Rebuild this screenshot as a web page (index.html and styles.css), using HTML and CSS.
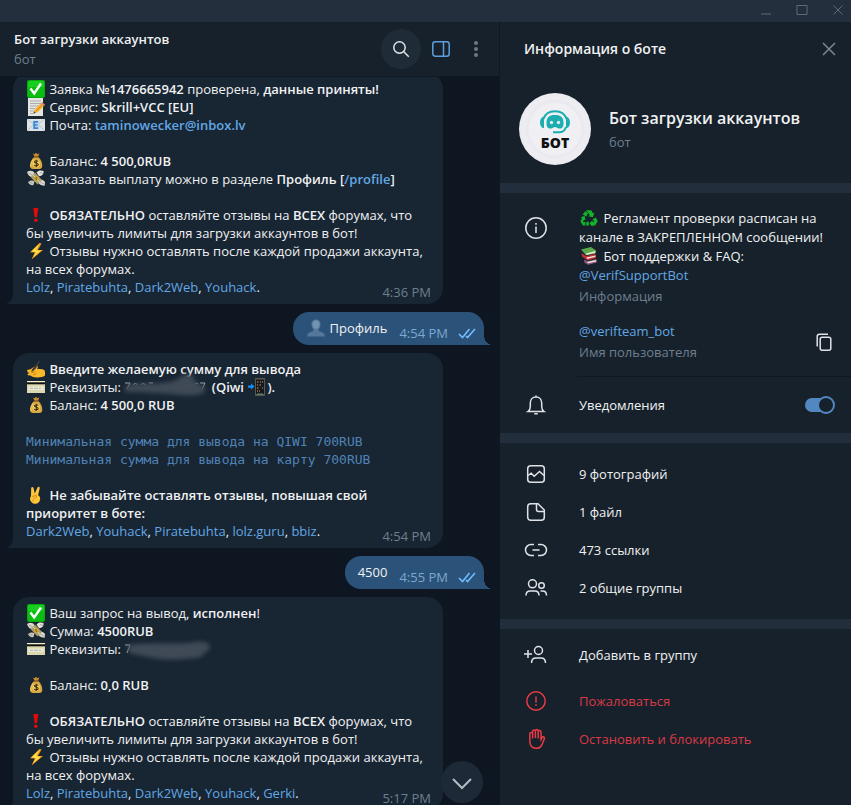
FILE: index.html
```
<!DOCTYPE html>
<html lang="ru">
<head>
    <meta charset="UTF-8">
    <meta name="viewport" content="width=device-width, initial-scale=1.0">
    <title>Бот загрузки аккаунтов</title>
    <link rel="stylesheet" href="styles.css">
</head>
<body>
    <!-- emoji sprite -->
    <svg class="sprite" aria-hidden="true">
        <symbol id="e-check" viewBox="0 0 18 18">
            <rect width="18" height="18" rx="2" fill="#06a80b"/>
            <rect x="1" y="1" width="16" height="8" rx="1.500" fill="#17cf1e"/>
            <rect x="1" y="7" width="16" height="10" rx="1.500" fill="#0bbd10"/>
            <path d="M3.500 8.500 L7.200 13.500 L14 3.500" fill="none" stroke="#fff" stroke-width="2.400"/>
        </symbol>
        <symbol id="e-memo" viewBox="0 0 18 18">
            <path d="M1 0h15v18H1z" fill="#e4e4e2"/>
            <path d="M3 3h11M3 5.500h11M3 8h9M3 10.500h5M3 13h4M3 15.500h4" stroke="#a9adb0" stroke-width="1"/>
            <path d="M6.500 15.500l1.200-4L14 5.200l3 2.800-6.500 6.300z" fill="#f5b22d"/>
            <path d="M9 13l6.500-6.300" stroke="#d9871b" stroke-width="1"/>
            <path d="M14 5.200l1.200-1.100 2.800 2.700L17 8z" fill="#e8787c"/>
            <path d="M6.500 15.500l.7-2.200 1.500 1.400z" fill="#333"/>
        </symbol>
        <symbol id="e-mail" viewBox="0 0 18 18">
            <rect y="3" width="18" height="12" fill="#dfe3e6"/>
            <path d="M0 3l9 7 9-7M0 15l6-6M18 15l-6-6" fill="none" stroke="#b4bcc2" stroke-width=".8"/>
            <rect x="5.500" y="4.500" width="7" height="9" fill="#b9d5ef"/>
            <path d="M11 5.800H7.200v6.400H11M7.200 9h3.400" fill="none" stroke="#3f83c8" stroke-width="1.700"/>
        </symbol>
        <symbol id="e-bag" viewBox="0 0 18 18">
            <path d="M6 1.500l1.500.8L9 .8l1.500 1.500 2-1-1.500 3.700H7.500z" fill="#c58b2c"/>
            <path d="M7.200 5h4c3 2.500 4.300 6 4 9.500-.2 1.700-1.500 2.500-3 2.500H6c-1.700 0-2.800-.9-3-2.500C2.700 11 4.300 7.500 7.200 5z" fill="#d9a941"/>
            <path d="M6 7.500c-1.500 2-2.300 4.500-2 7" stroke="#f3cf73" fill="none"/>
            <path d="M6.800 5h4.800" stroke="#7d4d16" stroke-width="1.300"/>
            <circle cx="9.200" cy="11.300" r="3.900" fill="#f0c95b"/>
            <path d="M11.200 9.500c-.8-1.200-3.800-1-3.700.5.1 1.500 3.800.9 3.800 2.600 0 1.600-3.200 1.700-4 .3M9.300 7.700v7.200" fill="none" stroke="#453010" stroke-width="1.100"/>
        </symbol>
        <symbol id="e-wings" viewBox="0 0 18 18">
            <path d="M0 2c3-2 6-1.500 7.500 1.200L6.500 7C3 7.500 1 5.500 0 2z" fill="#d9d7cc"/>
            <path d="M9.500 2.500C11 .3 14 0 16.500 1 17 4 15 6 12 6.300z" fill="#e6e4da"/>
            <path d="M1 12c2-2 5-2 6.500-.7l-1 3.700c-2.500.7-4.500-.5-5.500-3z" fill="#c8c6bb"/>
            <path d="M11.500 10c2.500-1 5 0 6.500 2l-.3 3.700c-2.700 0-5-.7-6.200-2.700z" fill="#dedcd2"/>
            <path d="M2 3l4 2.500M13 2.500l3 1M13 12l4 2M2.500 12.500l3 .5" stroke="#8f8f85" stroke-width=".7"/>
            <path d="M3.500 7l4.500-4.500 7 7.500-4.500 4.500z" fill="#a8a06f"/>
            <path d="M5.800 4.700l7 7.500" stroke="#e7e0a8" stroke-width="1"/>
            <circle cx="9.300" cy="8.500" r="2.300" fill="#d3a62f"/>
            <path d="M9.500 7.200l-1 1 1.300 1-.8.8" fill="none" stroke="#5f4a12" stroke-width=".8"/>
        </symbol>
        <symbol id="e-excl" viewBox="0 0 18 18">
            <path d="M6.300 2h5L10 11.300H7.600z" fill="#e00b0b"/>
            <circle cx="8.800" cy="14.300" r="1.800" fill="#e00b0b"/>
        </symbol>
        <symbol id="e-bolt" viewBox="0 0 18 18">
            <path d="M12.500 1L3 10.200l4.800.3L4.500 17.500l11.500-9.400-5.200-.2L14.500 1.500z" fill="#f9a01b"/>
            <path d="M12.300 2L4.500 9.600l4.700.3-3 5.400 7.500-6.600-4.700-.4z" fill="#ffe14a"/>
        </symbol>
        <symbol id="e-user" viewBox="0 0 18 18">
            <path d="M9 .5c3.200 0 4.600 2.200 4.600 5 0 2-1 3.800-2.100 5 .1 1.500.8 2 2.500 2.500 2.200.6 3.500 1.500 4 4.500H0c.5-3 1.800-3.900 4-4.500 1.700-.5 2.400-1 2.500-2.500-1.100-1.200-2.100-3-2.100-5 0-2.800 1.400-5 4.600-5z" fill="#54789a"/>
            <path d="M9 1.500c2.400 0 3.500 1.700 3.500 4S10.800 10 9 10 5.500 7.800 5.500 5.500s1.100-4 3.500-4z" fill="#7293b1"/>
        </symbol>
        <symbol id="e-write" viewBox="0 0 18 18">
            <path d="M0 10l3.500-.8L6 7.500 9 5.800c1.200-.5 2.200.3 1.700 1.500L10 8.700l5.500.6c1.800.3 2.500 1.500 2.500 3.200v3c-2 1.500-5 2-8 1.900-3 0-5.200-.6-6.500-1.900L1 15.300l-.6-1.300 2.200-1-1.800-.4z" fill="#fbb92a"/>
            <path d="M5 9.500L12 .5l1 .7L8.500 9l-4.300 3.500z" fill="#3f3a35"/>
            <path d="M4.500 13l4-1.500M6 15l3.500-1.500" stroke="#c87d13" stroke-width=".9"/>
        </symbol>
        <symbol id="e-card" viewBox="0 0 18 18">
            <rect y="3" width="18" height="12" fill="#dcd8ae"/>
            <rect y="3" width="18" height="1.300" fill="#f4f1d0"/>
            <rect y="4.300" width="18" height="2" fill="#111"/>
            <rect x="1.500" y="8.500" width="15" height="3.500" fill="#ebe8cf"/>
            <path d="M3 10.300h3M7 10.300h4M12 10.300h2" stroke="#a9b4c4" stroke-width="1"/>
        </symbol>
        <symbol id="e-phone" viewBox="0 0 18 18">
            <rect x="7" width="10" height="18" rx="1" fill="#58584f"/>
            <rect x="8" y="1.500" width="8" height="14.500" fill="#15191b"/>
            <path d="M9 4h1.500M12 4h1M14 4h1M9 7h1M11.500 7H13M9 10h1.500M14 10h1M9 13h1M11 13h1" stroke="#a8694f" stroke-width="1.300"/>
            <path d="M9 16h6" stroke="#5f9a77"/>
            <path d="M0 7.500h3V5.500l3.500 3-3.500 3V9.700H0z" fill="#1490f3"/>
        </symbol>
        <symbol id="e-victory" viewBox="0 0 18 18">
            <path d="M4 10L4.200 2c.2-1.500 2-1.500 2.300 0l1.300 5.500L10.500 1.400c.7-1.200 2.500-.6 2.200.8l-1.600 7c1.700.8 2.300 2.500 2 4.300C12.700 16 11 17.800 8.500 17.800 5.500 17.800 3 15.500 3 12.500z" fill="#fdc53a"/>
            <path d="M5 10.500l3.500-1c1.300.2 1.300 1.800 0 2.200l-2 .6M9.500 9.500v1.800M7 13c-1 .8-1.300 1.500-1 2.500" fill="none" stroke="#cf8517" stroke-width=".9"/>
        </symbol>
        <symbol id="e-recycle" viewBox="0 0 18 18">
            <g fill="#12b32b">
                <path d="M5.800 1.300h5.400l1.700 3 1.500-.6-1.500 4.500-4.600-1 1.500-.9-1.600-2.500z"/>
                <path d="M5.200 2.200l3 1.800-2 3.400-3.500-2z"/>
                <path d="M4.500 6.800l1.200 4.600-1.500-.8-1.300 2.300 2.500.1v3.600H3L.4 12.200 2 9.300.7 8.500z"/>
                <path d="M6.300 12.800h2.500v3.800H6.300z"/>
                <path d="M15.800 8.500l1.900 3.500-2.600 4.400h-2.600v1.400L9.400 14.600l3.100-3.300V13h1.800l-1.700-2.800z"/>
            </g>
        </symbol>
        <symbol id="e-books" viewBox="0 0 18 18">
            <path d="M1 2.500L11 0l5 3.500-1 3.200-9 1.500z" fill="#59a84a"/>
            <path d="M6 6.500L15.500 4v1.700L6 8z" fill="#e9e6da"/>
            <path d="M1.500 6l4.500 3 9.500-2 .5 4-8 2.500L2 9.500z" fill="#c62f35"/>
            <path d="M6.500 10.500l9-2v1.300l-8.500 2.200z" fill="#f0ece2"/>
            <path d="M4 12.500l4 1.700 8.500-2.200.5 3.500L8 17.800l-3.500-2z" fill="#8b5878"/>
            <path d="M7 15l9-2v1.500L8 16.300z" fill="#ece8e6"/>
        </symbol>
        <symbol id="i-checks" viewBox="0 0 18 12">
            <path d="M1 7l3.500 3.500L11.500 2M8 9l1.500 1.500L17 2" fill="none" stroke="#72bcfd" stroke-width="1.600"/>
        </symbol>
    </svg>

    <div class="titlebar">
        <button type="button" class="win-btn" aria-label="Свернуть">
            <svg width="12" height="12" viewBox="0 0 12 12"><path d="M1 10h10"/></svg>
        </button>
        <button type="button" class="win-btn" aria-label="Развернуть">
            <svg width="12" height="12" viewBox="0 0 12 12"><path d="M1 1.500h10v9H1z"/></svg>
        </button>
        <button type="button" class="win-btn" aria-label="Закрыть">
            <svg width="12" height="12" viewBox="0 0 12 12"><path d="M1.500 1.500l9 9M10.500 1.500l-9 9"/></svg>
        </button>
    </div>

    <div class="window">
        <main class="chat">
            <header class="chat-header">
                <div class="chat-title">
                    <h1>Бот загрузки аккаунтов</h1>
                    <p>бот</p>
                </div>
                <button type="button" class="icon-btn search" aria-label="Поиск">
                    <svg width="20" height="20" viewBox="0 0 20 20"><circle cx="8.500" cy="8.500" r="5.700"/><path d="M12.800 12.800l5 5"/></svg>
                </button>
                <button type="button" class="icon-btn panel-toggle" aria-label="Информация">
                    <svg width="20" height="20" viewBox="0 0 20 20"><rect x="1.800" y="2.800" width="16.400" height="14.400" rx="2.500"/><path d="M12.500 3v14"/></svg>
                </button>
                <button type="button" class="icon-btn more" aria-label="Меню">
                    <svg width="20" height="20" viewBox="0 0 20 20"><circle cx="10" cy="4" r="2"/><circle cx="10" cy="10" r="2"/><circle cx="10" cy="16" r="2"/></svg>
                </button>
            </header>

            <div class="messages">
                <div class="bubble in">
                    <svg class="emoji"><use href="#e-check"/></svg> Заявка <b>№1476665942</b> проверена, <b>данные приняты!</b><br>
                    <svg class="emoji"><use href="#e-memo"/></svg> Сервис: <b>Skrill+VCC [EU]</b><br>
                    <svg class="emoji"><use href="#e-mail"/></svg> Почта: <b><a href="#">taminowecker@inbox.lv</a></b><br>
                    <br>
                    <svg class="emoji"><use href="#e-bag"/></svg> Баланс: <b>4 500,0RUB</b><br>
                    <svg class="emoji"><use href="#e-wings"/></svg> Заказать выплату можно в разделе <b>Профиль [<a href="#">/profile</a>]</b><br>
                    <br>
                    <svg class="emoji"><use href="#e-excl"/></svg> <b>ОБЯЗАТЕЛЬНО</b> оставляйте отзывы на <b>ВСЕХ</b> форумах, что<br>
                    бы увеличить лимиты для загрузки аккаунтов в бот!<br>
                    <svg class="emoji"><use href="#e-bolt"/></svg> Отзывы нужно оставлять после каждой продажи аккаунта,<br>
                    на всех форумах.
                    <div class="last-line">
                        <span><a href="#">Lolz</a>, <a href="#">Piratebuhta</a>, <a href="#">Dark2Web</a>, <a href="#">Youhack</a>.</span>
                        <time>4:36 PM</time>
                    </div>
                </div>

                <div class="bubble out">
                    <div class="last-line">
                        <span><svg class="emoji"><use href="#e-user"/></svg> Профиль</span>
                        <time>4:54 PM <svg class="checks"><use href="#i-checks"/></svg></time>
                    </div>
                </div>

                <div class="bubble in">
                    <svg class="emoji"><use href="#e-write"/></svg> <b>Введите желаемую сумму для вывода</b><br>
                    <svg class="emoji"><use href="#e-card"/></svg> Реквизиты: <svg class="smudge" viewBox="0 0 84 18">
                        <path class="digits" d="M1 5h5l-3 6M9 7c1-2 4-2 4 0M17 7c1-2 4-2 4 0M25 5h4M70 7c1-2 3-2 4-1M76 5h5l-3 6"/>
                        <path class="ink" d="M1 8C18 3 42 8 54 1C60-6 72-5 70 3L81 9C83 17 72 18 58 17C42 16 30 14 1 14z"/>
                    </svg> <b>(Qiwi <svg class="emoji"><use href="#e-phone"/></svg>).</b><br>
                    <svg class="emoji"><use href="#e-bag"/></svg> Баланс: <b>4 500,0 RUB</b><br>
                    <br>
                    <code>Минимальная сумма для вывода на QIWI 700RUB</code><br>
                    <code>Минимальная сумма для вывода на карту 700RUB</code><br>
                    <br>
                    <svg class="emoji"><use href="#e-victory"/></svg> <b>Не забывайте оставлять отзывы, повышая свой<br>
                    приоритет в боте:</b>
                    <div class="last-line">
                        <span><a href="#">Dark2Web</a>, <a href="#">Youhack</a>, <a href="#">Piratebuhta</a>, <a href="#">lolz.guru</a>, <a href="#">bbiz</a>.</span>
                        <time>4:54 PM</time>
                    </div>
                </div>

                <div class="bubble out">
                    <div class="last-line">
                        <span>4500</span>
                        <time>4:55 PM <svg class="checks"><use href="#i-checks"/></svg></time>
                    </div>
                </div>

                <div class="bubble in">
                    <svg class="emoji"><use href="#e-check"/></svg> Ваш запрос на вывод, <b>исполнен</b>!<br>
                    <svg class="emoji"><use href="#e-wings"/></svg> Сумма: <b>4500RUB</b><br>
                    <svg class="emoji"><use href="#e-card"/></svg> Реквизиты: <svg class="smudge" viewBox="0 0 84 18">
                        <path class="digits" d="M1 5h5l-3 8"/>
                        <path class="ink" d="M4 5C28 2 50 4 66 3C80-1 89 4 85 10C79 13 80 18 70 18C54 20 40 20 30 18C18 16 8 14 4 12z"/>
                    </svg><br>
                    <br>
                    <svg class="emoji"><use href="#e-bag"/></svg> Баланс: <b>0,0 RUB</b><br>
                    <br>
                    <svg class="emoji"><use href="#e-excl"/></svg> <b>ОБЯЗАТЕЛЬНО</b> оставляйте отзывы на <b>ВСЕХ</b> форумах, что<br>
                    бы увеличить лимиты для загрузки аккаунтов в бот!<br>
                    <svg class="emoji"><use href="#e-bolt"/></svg> Отзывы нужно оставлять после каждой продажи аккаунта,<br>
                    на всех форумах.
                    <div class="last-line">
                        <span><a href="#">Lolz</a>, <a href="#">Piratebuhta</a>, <a href="#">Dark2Web</a>, <a href="#">Youhack</a>, <a href="#">Gerki</a>.</span>
                        <time>5:17 PM</time>
                    </div>
                </div>
            </div>

            <button type="button" class="scroll-down" aria-label="Вниз">
                <svg width="20" height="20" viewBox="0 0 20 20"><path d="M1 7l9 9 9-9"/></svg>
            </button>
        </main>

        <aside class="info">
            <header class="info-header">
                <h2>Информация о боте</h2>
                <button type="button" class="icon-btn close" aria-label="Закрыть">
                    <svg width="14" height="14" viewBox="0 0 14 14"><path d="M1 1l12 12M13 1L1 13"/></svg>
                </button>
            </header>

            <div class="profile">
                <div class="avatar">
                    <svg width="32" height="24" viewBox="0 0 32 24">
                        <path d="M4.500 9C6 3.500 10.500 1.200 16 1.200S26 3.500 27.500 9" fill="none" stroke="#1aaeb0" stroke-width="2"/>
                        <path d="M5 6.500v11.700C2.500 18 1 16 1 12.500S2.500 7.500 5 6.500zM27 6.500v11.700c2.500-.2 4-2.200 4-5.700s-1.500-5-4-6z" fill="#1aaeb0"/>
                        <path d="M7.500 13C7.500 7.500 10 5 16 5s8.500 2.500 8.500 8-2.500 5.500-4.500 5.500-2-1.500-4-1.500-2 1.500-4 1.500-4.500 0-4.500-5.500z" fill="#1aaeb0"/>
                        <circle cx="12.500" cy="12.500" r="1.700" fill="#e9e9f0"/>
                        <circle cx="19.500" cy="12.500" r="1.700" fill="#e9e9f0"/>
                        <path d="M27 17c-1 3.500-3.500 5.300-7 5.300h-6" fill="none" stroke="#1aaeb0" stroke-width="2"/>
                    </svg>
                    <span>БОТ</span>
                </div>
                <div class="profile-name">
                    <h3>Бот загрузки аккаунтов</h3>
                    <p>бот</p>
                </div>
            </div>

            <section class="block about">
                <svg class="icon" viewBox="0 0 24 24"><circle cx="12" cy="12" r="10.200"/><path d="M12 10.500v6.500M12 7v1.800"/></svg>
                <div class="about-text">
                    <p><svg class="emoji"><use href="#e-recycle"/></svg> Регламент проверки расписан на<br>
                    канале в ЗАКРЕПЛЕННОМ сообщении!<br>
                    <svg class="emoji"><use href="#e-books"/></svg> Бот поддержки &amp; FAQ:<br>
                    <a href="#">@VerifSupportBot</a></p>
                    <p class="label">Информация</p>
                </div>
                <div class="username">
                    <div>
                        <p><a href="#">@verifteam_bot</a></p>
                        <p class="label">Имя пользователя</p>
                    </div>
                    <button type="button" class="icon-btn copy" aria-label="Копировать">
                        <svg width="20" height="20" viewBox="0 0 20 20"><rect x="6.200" y="5.200" width="10.600" height="13" rx="2"/><path d="M3.200 14.500V4.500a2.300 2.300 0 0 1 2.300-2.300H14"/></svg>
                    </button>
                </div>
            </section>

            <div class="notify">
                <svg class="icon" viewBox="0 0 24 24"><path d="M4 18.500c1.800-1.300 2.300-2.500 2.300-5V10c0-3.500 2.200-6 5.700-6s5.700 2.500 5.700 6v3.500c0 2.500.5 3.700 2.300 5zM12 4V2.500M10.300 20.800h3.400"/></svg>
                <label for="notifications">Уведомления</label>
                <input type="checkbox" class="toggle" id="notifications" checked>
            </div>

            <section class="block list">
                <button type="button" class="row">
                    <svg class="icon" viewBox="0 0 24 24"><rect x="3.700" y="3.700" width="16.600" height="16.600" rx="3"/><path d="M4 13.500l3.200-2.300 3 3 5.300-4.700 4.500 4"/></svg>
                    9 фотографий
                </button>
                <button type="button" class="row">
                    <svg class="icon" viewBox="0 0 24 24"><path d="M6.700 3.700H14l6.300 6.300v7.300a3 3 0 0 1-3 3H6.700a3 3 0 0 1-3-3V6.700a3 3 0 0 1 3-3z"/><path d="M12.500 4v5.500a2 2 0 0 0 2 2H20"/></svg>
                    1 файл
                </button>
                <button type="button" class="row">
                    <svg class="icon" viewBox="0 0 24 24"><path d="M10 6.500H7a5.500 5.500 0 0 0 0 11h3M14 6.500h3a5.500 5.500 0 0 1 0 11h-3M8.500 12h7"/></svg>
                    473 ссылки
                </button>
                <button type="button" class="row">
                    <svg class="icon" viewBox="0 0 24 24"><circle cx="8.500" cy="7.800" r="4"/><circle cx="17.500" cy="9.500" r="2.800"/><path d="M2 19.500c0-3.500 2-4.500 4.200-4.500h4.600c2.200 0 4.200 1 4.200 4.500M16.500 15h2c2.500 0 4 1.200 4 4.500"/></svg>
                    2 общие группы
                </button>
            </section>

            <section class="block actions">
                <button type="button" class="row">
                    <svg class="icon" viewBox="0 0 24 24"><circle cx="14.500" cy="7.500" r="4"/><path d="M7.500 20c0-3.800 1.800-5 4.500-5h5c2.700 0 4.500 1.200 4.500 5M0 11h8M4 7v8"/></svg>
                    Добавить в группу
                </button>
                <button type="button" class="row danger">
                    <svg class="icon" viewBox="0 0 24 24"><circle cx="12" cy="12" r="9.200"/><path d="M12 7.500v6M12 15v1.800"/></svg>
                    Пожаловаться
                </button>
                <button type="button" class="row danger">
                    <svg class="icon" viewBox="0 0 24 24"><path d="M5.800 14V7a1.400 1.400 0 0 1 2.800 0V4.500a1.400 1.400 0 0 1 2.800 0V4a1.400 1.400 0 0 1 2.800 0v1a1.400 1.400 0 0 1 2.800 0v7.500l1.200-2c.8-1.200 2.600-.5 2.200.9-1 3-2 5.600-3.200 7.600-1 1.600-2.700 2.200-5 2.200-4.400 0-6.400-2.700-6.400-7.200zM8.600 7v4.500M11.400 4.500v6.500M14.200 5v6.500"/></svg>
                    Остановить и блокировать
                </button>
            </section>
        </aside>
    </div>
</body>
</html>
```
FILE: styles.css
```
*, ::before, ::after {
    box-sizing: border-box;
}
body {
    margin: 0;
    height: 100vh;
    display: flex;
    flex-direction: column;
    overflow: hidden;
    background: #0e1621;
    color: #f0f1f2;
    font-family: "Open Sans", "Noto Sans", sans-serif;
    font-size: 13px;
    line-height: 18px;
}
h1, h2, h3, p {
    margin: 0;
    font-weight: 600;
}
p {
    font-weight: 400;
}
b {
    font-weight: 600;
}
a {
    color: #62a8e5;
    text-decoration: none;
}
button {
    padding: 0;
    border: none;
    background: none;
    color: inherit;
    font: inherit;
    cursor: pointer;
}
svg {
    fill: none;
    stroke-width: 1.5;
}
.sprite {
    position: absolute;
    width: 0;
    height: 0;
}
.sprite symbol {
    stroke-width: 1;
}
.emoji {
    width: 18px;
    height: 18px;
    margin: 0 1px;
    vertical-align: -4px;
}

/* window frame */
.titlebar {
    flex: none;
    display: flex;
    justify-content: flex-end;
    gap: 24px;
    height: 22px;
    padding: 0 7px;
    background: #242f3d;
}
.win-btn {
    display: flex;
    align-items: center;
    height: 20px;
}
.win-btn svg {
    stroke: #5d6b78;
    stroke-width: 1;
}
.window {
    flex: 1;
    min-height: 0;
    display: flex;
}

/* chat */
.chat {
    position: relative;
    flex: 1;
    min-width: 0;
    display: flex;
    flex-direction: column;
}
.chat-header {
    flex: none;
    display: flex;
    align-items: center;
    height: 55px;
    padding: 0 9px 0 14px;
    background: #17212b;
    border-bottom: 1px solid #101922;
}
.chat-title {
    flex: 1;
}
.chat-title h1 {
    font-size: 13px;
    line-height: 20px;
}
.chat-title p {
    line-height: 20px;
    color: #6d7f8f;
}
.icon-btn {
    display: flex;
    align-items: center;
    justify-content: center;
}
.chat-header .icon-btn {
    width: 30px;
    height: 40px;
}
.chat-header .search {
    width: 40px;
    margin-right: 5px;
    border-radius: 50%;
    background: #202b38;
    stroke: #dfe3e7;
}
.chat-header .panel-toggle {
    margin-right: 5px;
    stroke: #5ba0dc;
}
.more svg {
    fill: #6c7883;
}
.messages {
    flex: 1;
    min-height: 0;
    display: flex;
    flex-direction: column;
    align-items: flex-start;
    gap: 8px;
    padding: 0 16px 0 13px;
    overflow: hidden;
}
/* history is scrolled a little past the first bubble */
.messages .bubble:first-child {
    margin-top: -4px;
}
.bubble {
    position: relative;
    flex: none;
    max-width: 430px;
    padding: 7px 12px 8px 13px;
    border-radius: 16px;
}
.bubble::after {
    content: "";
    position: absolute;
    bottom: 0;
    width: 6px;
    height: 10px;
}
.in {
    width: 100%;
    background: #182533;
    border-bottom-left-radius: 0;
}
.in::after {
    right: 100%;
    background: radial-gradient(ellipse 6px 9px at top left, transparent 98%, #182533);
}
.out {
    align-self: flex-end;
    padding-right: 8px;
    background: #2b5278;
    border-bottom-right-radius: 0;
}
.out::after {
    left: 100%;
    background: radial-gradient(ellipse 6px 9px at top right, transparent 98%, #2b5278);
}
.last-line {
    display: flex;
    justify-content: space-between;
    gap: 12px;
}
.last-line time {
    display: flex;
    align-items: center;
    gap: 10px;
    margin: 5px 0 -5px;
    color: #6d7f8f;
}
.out time {
    color: #7da8d3;
}
.checks {
    width: 18px;
    height: 12px;
}
code {
    color: #4f83b5;
    font-family: "DejaVu Sans Mono", monospace;
    font-size: 13px;
    line-height: 1;
}
.smudge {
    width: 84px;
    height: 18px;
    vertical-align: -4px;
    overflow: visible;
}
.smudge .digits {
    stroke: #a4abb2;
    stroke-width: 1;
}
.smudge .ink {
    fill: #3f4a56;
    filter: blur(2px);
}
.scroll-down {
    position: absolute;
    right: 17px;
    bottom: 2px;
    display: flex;
    align-items: center;
    justify-content: center;
    width: 42px;
    height: 42px;
    border-radius: 50%;
    background: #1d2937;
    stroke: #b4bac0;
}
.scroll-down svg {
    stroke-width: 2;
}

/* info panel */
.info {
    position: relative;
    flex: none;
    width: 351px;
    background: #17212b;
    box-shadow: -1px 0 #0f1820;
}
.info-header {
    display: flex;
    align-items: center;
    justify-content: space-between;
    height: 54px;
    padding: 0 15px 0 24px;
}
.info-header h2 {
    font-size: 14px;
}
.close {
    stroke: #7d8790;
}
.profile {
    display: flex;
    align-items: center;
    gap: 18px;
    padding: 17px 19px 18px;
}
.avatar {
    flex: none;
    display: flex;
    flex-direction: column;
    align-items: center;
    width: 72px;
    height: 72px;
    padding-top: 17px;
    border-radius: 50%;
    background: radial-gradient(circle, #efeff4 50%, #e8e8ee 54%, #ededf2 60%, #e6e6ec);
    color: #111;
    font-family: "Open Sans", sans-serif;
    font-size: 14px;
    font-weight: 800;
    line-height: 18px;
}
.profile-name {
    padding-top: 2px;
}
.profile-name h3 {
    font-size: 16px;
    line-height: 24px;
}
.profile-name p {
    line-height: 24px;
    color: #6d7f8f;
}
.icon {
    width: 24px;
    height: 24px;
    justify-self: center;
    stroke: #dfe3e7;
}
.block {
    border-top: 10px solid #232e3c;
}
.label {
    margin-top: 2px;
    color: #6d7f8f;
}
.about, .notify, .row {
    display: grid;
    grid-template-columns: 72px 1fr;
    column-gap: 7px;
    line-height: 19px;
}
.about {
    row-gap: 16px;
    padding: 16px 0 14px;
}
.about .icon {
    margin-top: 7px;
}
.about .emoji {
    margin-right: 2px;
}
.username {
    grid-column: 2;
    display: flex;
    align-items: center;
    justify-content: space-between;
    padding-right: 17px;
}
.copy {
    stroke: #dfe3e7;
}
.notify {
    grid-template-columns: 72px 1fr auto;
    align-items: center;
    padding: 10px 16px 9px 0;
    background: linear-gradient(#101922, #101922) 77px 0 / 100% 1px no-repeat;
}
.notify label {
    line-height: 38px;
}
.toggle {
    appearance: none;
    display: flex;
    align-items: center;
    justify-content: flex-end;
    width: 30px;
    height: 14px;
    margin: 0;
    border-radius: 7px;
    background: linear-gradient(#5288c1, #5288c1) 0 0 / 22px 14px no-repeat;
    cursor: pointer;
}
.toggle::before {
    content: "";
    width: 18px;
    height: 18px;
    flex: none;
    border: 2px solid #5288c1;
    border-radius: 50%;
    background: #17212b;
}
.list {
    padding: 12px 0;
}
.actions {
    padding-top: 7px;
}
.row {
    width: 100%;
    height: 38px;
    align-items: center;
    text-align: left;
}
.actions .row:first-child {
    margin-bottom: 8px;
}
.danger {
    color: #d93a45;
}
.danger .icon {
    stroke: #ec3942;
}
```
